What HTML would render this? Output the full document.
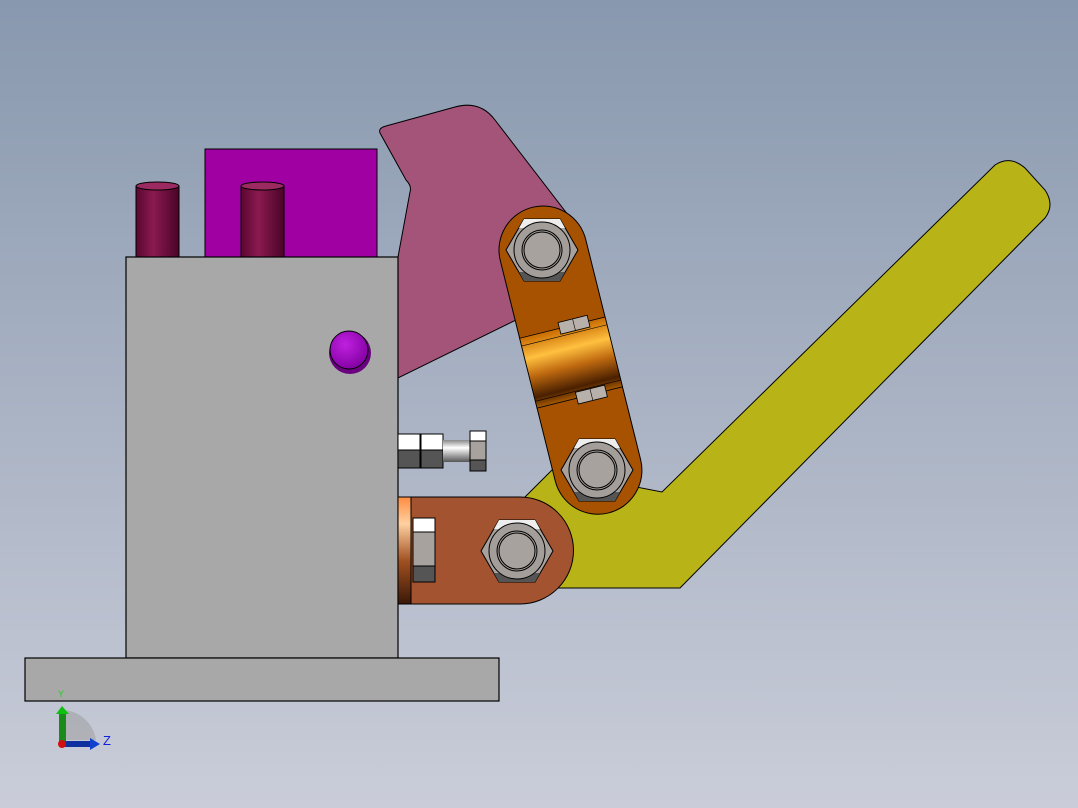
<!DOCTYPE html>
<html><head><meta charset="utf-8"><style>
html,body{margin:0;padding:0;width:1078px;height:808px;overflow:hidden}
svg{display:block}
</style></head><body>
<svg width="1078" height="808" viewBox="0 0 1078 808" xmlns="http://www.w3.org/2000/svg">
<defs>
<linearGradient id="bg" x1="0" y1="0" x2="0" y2="1">
<stop offset="0" stop-color="#8898ae"/><stop offset="1" stop-color="#cacdd9"/></linearGradient>
<linearGradient id="pin" x1="0" y1="0" x2="1" y2="0">
<stop offset="0" stop-color="#5a0630"/><stop offset="0.4" stop-color="#8a1a50"/><stop offset="1" stop-color="#4a0428"/></linearGradient>
<linearGradient id="band" x1="0" y1="0" x2="0" y2="1">
<stop offset="0" stop-color="#c86a00"/><stop offset="0.3" stop-color="#ffc040"/><stop offset="0.55" stop-color="#c06a10"/><stop offset="0.85" stop-color="#4a2000"/><stop offset="1" stop-color="#a85a00"/></linearGradient>
<linearGradient id="strip" x1="0" y1="0" x2="0" y2="1">
<stop offset="0" stop-color="#ff8c40"/><stop offset="0.25" stop-color="#ffd0a0"/><stop offset="0.6" stop-color="#a05020"/><stop offset="1" stop-color="#3a1808"/></linearGradient>
<linearGradient id="shaft" x1="0" y1="0" x2="0" y2="1">
<stop offset="0" stop-color="#888"/><stop offset="0.35" stop-color="#fff"/><stop offset="1" stop-color="#555"/></linearGradient>
<radialGradient id="btn" cx="0.4" cy="0.35" r="0.7"><stop offset="0" stop-color="#c020e0"/><stop offset="1" stop-color="#8000a0"/></radialGradient>
<g id="nut">
<polygon points="-36,0 -18,-31 18,-31 36,0 18,31 -18,31" fill="#a8a29e" stroke="#000" stroke-width="1"/>
<polygon points="-18,-31 18,-31 23,-22 -23,-22" fill="#eee"/>
<polygon points="-18,31 18,31 23,22 -23,22" fill="#555"/>
<circle r="28" fill="#a49e9a" stroke="#000" stroke-width="1"/>
<circle r="20" fill="none" stroke="#000" stroke-width="1"/>
<circle r="18" fill="#a8a29e" stroke="#000" stroke-width="1"/>
</g>
</defs>
<rect width="1078" height="808" fill="url(#bg)"/>

<path d="M525,497 L552,470 L600,480 L662,492 L995,165 Q1010,155 1025,168 L1045,190 Q1055,205 1045,218 L680,588 L555,588 Z" fill="#b8b418" stroke="#000" stroke-width="1"/>

<path d="M380,133 Q378,128 386,126 L455,107 Q480,100 495,120 L585,237 L520,318 L398,378 L398,257 L410,192 Q412,186 406,180 Z" fill="#a45479" stroke="#000" stroke-width="1"/>

<rect x="205" y="149" width="172" height="108" fill="#a000a2" stroke="#000" stroke-width="1"/>
<rect x="136" y="186" width="43" height="71" fill="url(#pin)" stroke="#000"/>
<ellipse cx="157.5" cy="186" rx="21.5" ry="4" fill="#9a2a60" stroke="#000"/>
<rect x="241" y="186" width="43" height="71" fill="url(#pin)" stroke="#000"/>
<ellipse cx="262.5" cy="186" rx="21.5" ry="4" fill="#9a2a60" stroke="#000"/>

<rect x="126" y="257" width="272" height="401" fill="#a8a8a8" stroke="#000" stroke-width="1.2"/>
<circle cx="350" cy="353" r="21" fill="#6a0080"/>
<circle cx="349" cy="350" r="19" fill="url(#btn)" stroke="#000"/>
<rect x="25" y="658" width="474" height="43" fill="#a8a8a8" stroke="#000" stroke-width="1.2"/>

<rect x="398" y="434" width="22" height="34" fill="#555" stroke="#000"/>
<rect x="398" y="434" width="22" height="16" fill="#fff" stroke="#000"/>
<rect x="421" y="434" width="22" height="34" fill="#555" stroke="#000"/>
<rect x="421" y="434" width="22" height="16" fill="#fff" stroke="#000"/>
<rect x="443" y="440" width="27" height="22" fill="url(#shaft)"/>
<rect x="470" y="431" width="16" height="40" fill="#a8a29e" stroke="#000"/>
<rect x="470" y="431" width="16" height="10" fill="#fff" stroke="#000"/>
<rect x="470" y="460" width="16" height="11" fill="#555" stroke="#000"/>

<path d="M398,497 L520,497 A53,53 0 0 1 520,604 L398,604 Z" fill="#a45330" stroke="#000" stroke-width="1"/>
<rect x="398" y="497" width="13" height="107" fill="url(#strip)" stroke="#000"/>
<rect x="413" y="518" width="22" height="64" fill="#a8a29e" stroke="#000"/>
<rect x="413" y="518" width="22" height="14" fill="#fff" stroke="#000"/>
<rect x="413" y="566" width="22" height="16" fill="#555" stroke="#000"/>
<use href="#nut" x="517" y="551"/>

<g transform="translate(543,250) rotate(-14)">
<path d="M-44,0 A44,44 0 0 1 44,0 L44,227 A44,44 0 0 1 -44,227 Z" fill="#a65200" stroke="#000" stroke-width="1"/>
<rect x="-44" y="80" width="88" height="72" fill="url(#band)" stroke="#000" stroke-width="0.8"/>
<line x1="-44" y1="88" x2="44" y2="88" stroke="#000" stroke-width="0.6"/>
<line x1="-44" y1="145" x2="44" y2="145" stroke="#000" stroke-width="0.6"/>
<rect x="-3" y="74" width="30" height="12" fill="#b8b0aa" stroke="#000" stroke-width="0.8"/>
<line x1="12" y1="74" x2="12" y2="86" stroke="#000" stroke-width="0.6"/>
<rect x="-3" y="146" width="30" height="12" fill="#b8b0aa" stroke="#000" stroke-width="0.8"/>
<line x1="12" y1="146" x2="12" y2="158" stroke="#000" stroke-width="0.6"/>
</g>
<use href="#nut" x="542" y="250"/>
<use href="#nut" x="597" y="470"/>

<path d="M63,740 L63,710 A35,35 0 0 1 96,740 Z" fill="#999" opacity="0.5"/>
<rect x="59" y="712" width="7" height="30" fill="#1a8a1a"/>
<polygon points="56,714 62,706 69,714" fill="#10c010"/>
<text x="58" y="697" font-family="Liberation Sans,sans-serif" font-size="9" fill="#20d020">Y</text>
<rect x="62" y="741" width="30" height="6" fill="#1030a0"/>
<polygon points="90,738 100,744 90,750" fill="#1040d0"/>
<circle cx="62" cy="744" r="4" fill="#d01010"/>
<text x="103" y="745" font-family="Liberation Sans,sans-serif" font-size="13" fill="#1020e0">Z</text>
</svg>
</body></html>
